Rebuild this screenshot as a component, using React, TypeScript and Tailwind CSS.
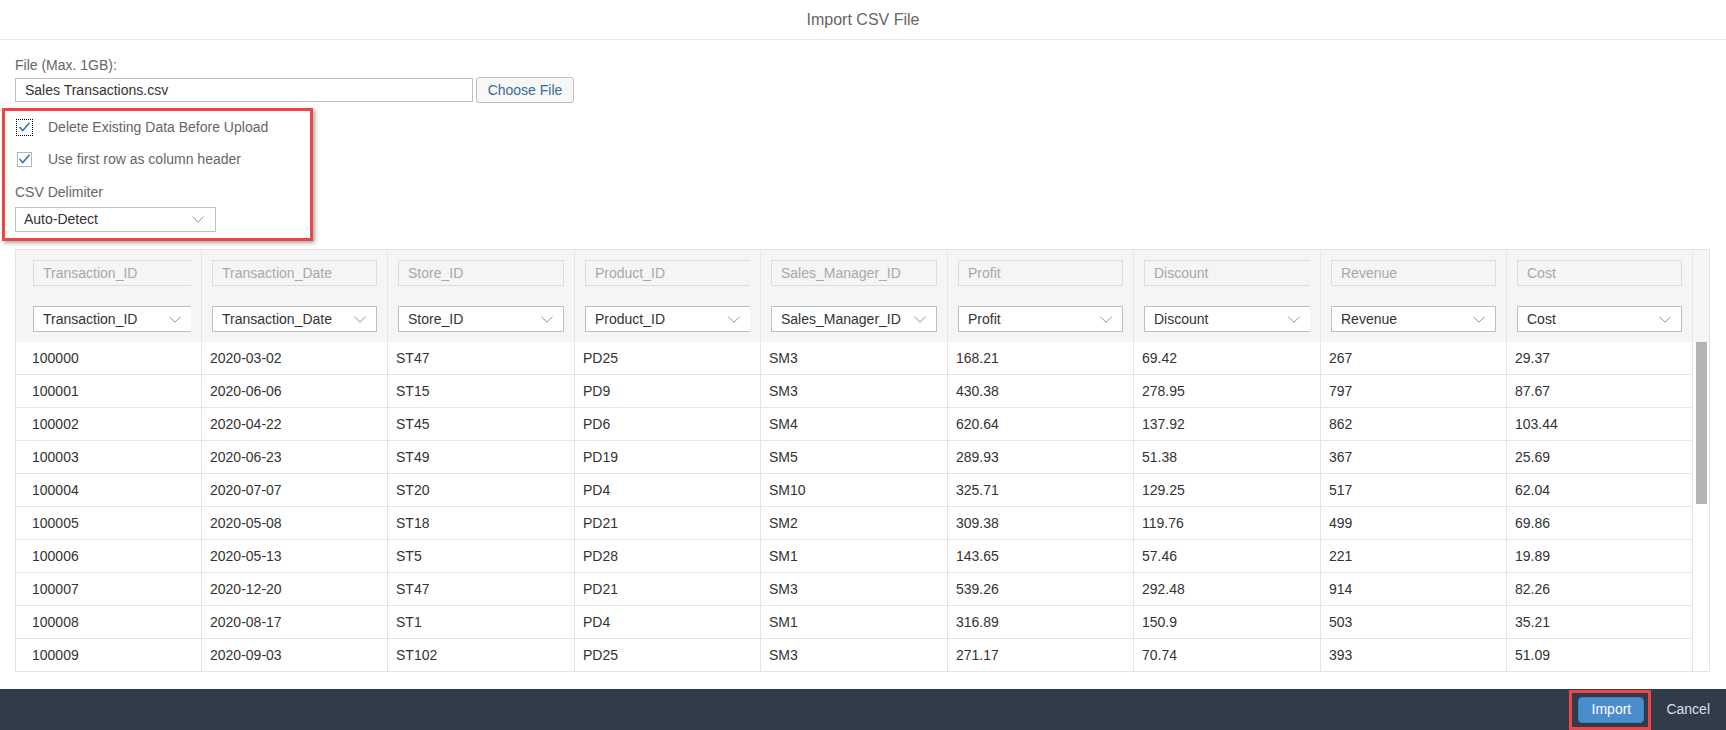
import React from "react";

const cols = [
  "Transaction_ID",
  "Transaction_Date",
  "Store_ID",
  "Product_ID",
  "Sales_Manager_ID",
  "Profit",
  "Discount",
  "Revenue",
  "Cost",
];
const widths = [
  "w-[186px]",
  "w-[186px]",
  "w-[187px]",
  "w-[186px]",
  "w-[187px]",
  "w-[186px]",
  "w-[187px]",
  "w-[186px]",
  "w-[186px]",
];
const clipped = [true, false, false, true, false, false, true, false, false];

const rows: string[][] = [
  ["100000", "2020-03-02", "ST47", "PD25", "SM3", "168.21", "69.42", "267", "29.37"],
  ["100001", "2020-06-06", "ST15", "PD9", "SM3", "430.38", "278.95", "797", "87.67"],
  ["100002", "2020-04-22", "ST45", "PD6", "SM4", "620.64", "137.92", "862", "103.44"],
  ["100003", "2020-06-23", "ST49", "PD19", "SM5", "289.93", "51.38", "367", "25.69"],
  ["100004", "2020-07-07", "ST20", "PD4", "SM10", "325.71", "129.25", "517", "62.04"],
  ["100005", "2020-05-08", "ST18", "PD21", "SM2", "309.38", "119.76", "499", "69.86"],
  ["100006", "2020-05-13", "ST5", "PD28", "SM1", "143.65", "57.46", "221", "19.89"],
  ["100007", "2020-12-20", "ST47", "PD21", "SM3", "539.26", "292.48", "914", "82.26"],
  ["100008", "2020-08-17", "ST1", "PD4", "SM1", "316.89", "150.9", "503", "35.21"],
  ["100009", "2020-09-03", "ST102", "PD25", "SM3", "271.17", "70.74", "393", "51.09"],
];

function Chevron() {
  return (
    <svg width="12" height="7" viewBox="0 0 12 7" className="shrink-0">
      <polyline
        points="0.5,0.8 6,6.2 11.5,0.8"
        fill="none"
        stroke="#6489b0"
        strokeWidth="0.9"
      />
    </svg>
  );
}

function Check() {
  return (
    <svg width="13" height="12" viewBox="0 0 13 12">
      <polyline
        points="1.5,6 4.8,9.6 11.5,1.8"
        fill="none"
        stroke="#3a73aa"
        strokeWidth="1.6"
      />
    </svg>
  );
}

export default function App() {
  return (
    <div className="w-[1726px] h-[730px] overflow-hidden bg-white flex flex-col font-['Liberation_Sans',Arial,sans-serif] text-[14px] text-[#333]">
      {/* Title bar */}
      <div className="h-[40px] shrink-0 border-b border-[#e5e5e5] flex items-center justify-center text-[16px] text-[#666]">
        Import CSV File
      </div>

      {/* Content */}
      <div className="relative flex flex-col px-[15px]">
        <div className="mt-[17px] h-[16px] leading-[16px] text-[#666]">File (Max. 1GB):</div>
        <div className="mt-[4px] h-[26px] flex items-center">
          <div className="w-[458px] h-[24px] border border-[#bfbfbf] bg-white flex items-center pl-[9px] text-[#333]">
            Sales Transactions.csv
          </div>
          <div className="ml-[3px] w-[98px] h-[26px] border border-[#bfbfbf] rounded-[3px] bg-[#f7f7f7] flex items-center justify-center text-[#3b6a97]">
            Choose File
          </div>
        </div>

        <div className="mt-[8px] h-[32px] flex items-center">
          <div className="w-[33px] flex items-center">
            <div className="ml-[1px] w-[17px] h-[17px] border border-dotted border-black flex items-center justify-center">
              <Check />
            </div>
          </div>
          <span className="text-[#666]">Delete Existing Data Before Upload</span>
        </div>
        <div className="h-[32px] flex items-center">
          <div className="w-[33px] flex items-center">
            <div className="ml-[2px] w-[15px] h-[15px] border border-[#b5b5b5] bg-white flex items-center justify-center">
              <Check />
            </div>
          </div>
          <span className="text-[#666]">Use first row as column header</span>
        </div>

        <div className="mt-[9px] h-[16px] leading-[16px] text-[#666]">CSV Delimiter</div>
        <div className="mt-[7px] w-[201px] h-[25px] border border-[#bfbfbf] bg-white flex items-center pl-[8px] pr-[11px]">
          <span className="flex-1">Auto-Detect</span>
          <Chevron />
        </div>

        {/* annotation highlight */}
        <div className="absolute left-[2px] top-[68px] w-[311px] h-[133px] border-[3px] border-[#f04545] shadow-[2px_2px_4px_rgba(0,0,0,0.35)] pointer-events-none" />

        {/* Table */}
        <div className="mt-[17px] w-[1695px] h-[423px] border border-[#e3e3e3] flex">
          <div className="flex flex-col">
            <div className="flex h-[92px] bg-[#f5f5f5]">
              {cols.map((c, i) => (
                <div
                  key={c}
                  className={`${widths[i]} shrink-0 border-r border-[#e6e6e6] flex flex-col pt-[10px] ${
                    i === 0 ? "pl-[17px] pr-[10px]" : "px-[10px]"
                  }`}
                >
                  <div
                    className={`h-[26px] bg-[#f5f5f5] border border-[#dcdcdc] ${
                      clipped[i] ? "border-r-0" : ""
                    } flex items-center pl-[9px] text-[#a8a8a8] whitespace-nowrap overflow-hidden`}
                  >
                    {c}
                  </div>
                  <div
                    className={`mt-[20px] h-[26px] bg-white border border-[#bfbfbf] ${
                      clipped[i] ? "border-r-0" : ""
                    } flex items-center pl-[9px] pr-[10px] text-[#333] whitespace-nowrap overflow-hidden`}
                  >
                    <span className="flex-1">{c}</span>
                    <Chevron />
                  </div>
                </div>
              ))}
            </div>
            {rows.map((r, ri) => (
              <div
                key={ri}
                className={`flex ${
                  ri === rows.length - 1 ? "h-[32px]" : "h-[33px] border-b border-[#e5e5e5]"
                }`}
              >
                {r.map((v, i) => (
                  <div
                    key={i}
                    className={`${widths[i]} shrink-0 border-r border-[#e5e5e5] flex items-center ${
                      i === 0 ? "pl-[16px]" : "pl-[8px]"
                    }`}
                  >
                    {v}
                  </div>
                ))}
              </div>
            ))}
          </div>
          {/* scrollbar */}
          <div className="w-[16px] flex flex-col">
            <div className="h-[92px] bg-[#f5f5f5]" />
            <div className="flex-1 bg-white">
              <div className="ml-[3px] w-[11px] h-[162px] bg-[#b3b3b3]" />
            </div>
          </div>
        </div>
      </div>

      {/* Footer */}
      <div className="mt-[17px] h-[41px] shrink-0 bg-[#323c48] flex items-center justify-end pr-[16px]">
        <div className="relative">
          <div className="w-[66px] h-[26px] rounded-[4px] bg-[#4a8dcd] border border-[#3f80c0] flex items-center justify-center text-white">
            Import
          </div>
          <div className="absolute -left-[9px] -right-[7px] -top-[7px] -bottom-[7px] border-[3px] border-[#f04545] pointer-events-none" />
        </div>
        <span className="ml-[22px] text-[#d4e1ee]">Cancel</span>
      </div>
    </div>
  );
}
